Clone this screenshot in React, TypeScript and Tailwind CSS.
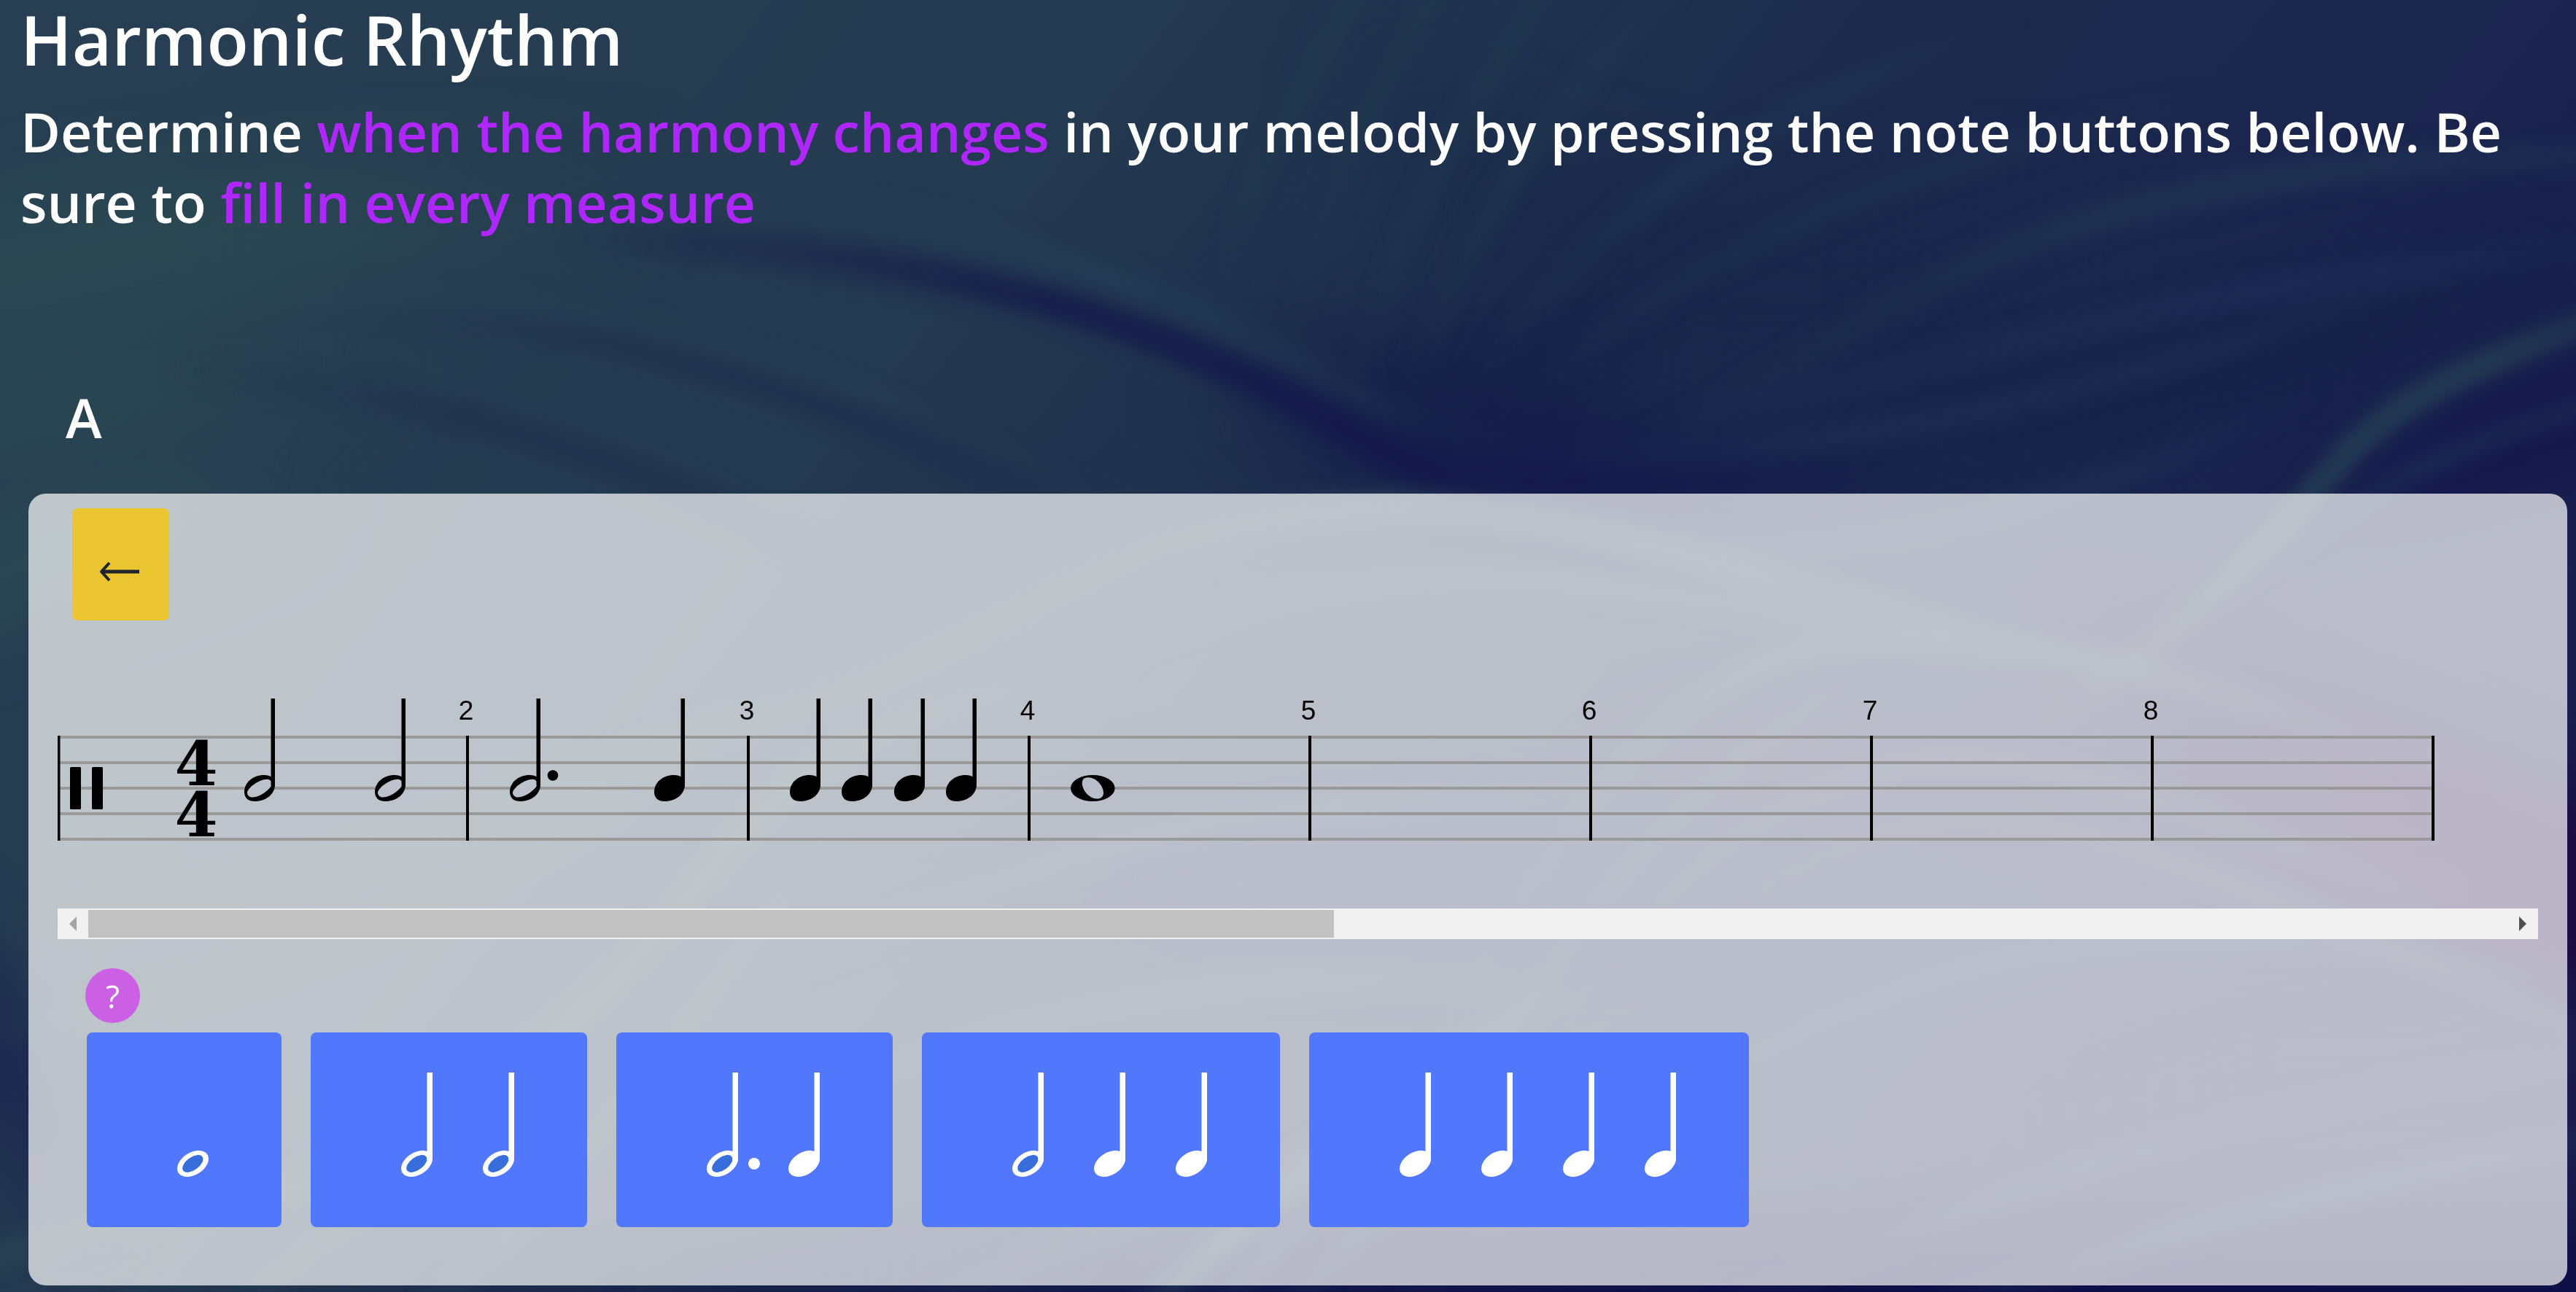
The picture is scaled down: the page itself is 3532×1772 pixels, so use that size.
import type { ReactNode } from "react";

type Streak = { d: string; w: number; c: string; o: number };

const broad: Streak[] = [
  { d: "M-340 230 C-80 180 100 130 400 130", w: 70, c: "#2e5053", o: 0.65 },
  { d: "M-300 300 C-60 260 60 220 260 230", w: 60, c: "#2e5053", o: 0.55 },
  { d: "M-200 420 C-60 370 40 330 200 290", w: 50, c: "#2e5254", o: 0.7 },
  { d: "M720 240 C850 290 980 310 1180 290", w: 50, c: "#12114a", o: 0.8 },
  { d: "M740 190 C830 250 900 250 1040 190", w: 70, c: "#151c48", o: 0.7 },
  { d: "M800 40 C900 160 1000 200 1300 160", w: 110, c: "#17254a", o: 0.6 },
  { d: "M960 285 C1200 270 1350 220 1700 120", w: 60, c: "#152046", o: 0.6 },
  { d: "M1340 360 C1480 280 1560 250 1800 190", w: 50, c: "#13134a", o: 0.9 },
  { d: "M1200 380 C1440 480 1520 560 1900 640", w: 130, c: "#1c0a42", o: 0.9 },
  { d: "M940 480 C1200 450 1360 500 1600 600", w: 60, c: "#24174a", o: 0.5 },
  { d: "M-120 540 C0 620 20 690 80 760", w: 60, c: "#1a2250", o: 0.9 },
  { d: "M520 570 C800 500 900 520 1080 560", w: 90, c: "#1a1e54", o: 0.5 },
  { d: "M1100 720 C1320 640 1450 660 1800 700", w: 90, c: "#20164c", o: 0.5 },
  { d: "M100 810 C500 770 900 770 2400 790", w: 60, c: "#0c0c46", o: 1 },
];

const fine: Streak[] = [
  { d: "M260 100 C480 110 660 150 780 215 C840 250 860 262 960 272", w: 16, c: "#26415a", o: 0.45 },
  { d: "M340 145 C600 150 730 210 820 262 C870 292 940 330 1080 370", w: 20, c: "#131549", o: 0.7 },
  { d: "M200 185 C380 190 560 250 760 370", w: 20, c: "#1a2549", o: 0.4 },
  { d: "M100 225 C280 240 420 290 560 370", w: 18, c: "#1c294b", o: 0.35 },
  { d: "M-110 250 C100 170 260 160 440 215 C560 250 640 290 800 380", w: 14, c: "#2c4758", o: 0.35 },
  { d: "M-200 200 C0 90 180 60 420 70", w: 16, c: "#2e4e52", o: 0.25 },
  { d: "M730 250 C740 130 790 60 860 -60", w: 10, c: "#264452", o: 0.42 },
  { d: "M780 260 C790 140 830 60 910 -60", w: 10, c: "#264452", o: 0.42 },
  { d: "M820 270 C840 150 890 60 980 -60", w: 10, c: "#264452", o: 0.45 },
  { d: "M850 280 C870 180 920 80 1050 -40", w: 10, c: "#264452", o: 0.45 },
  { d: "M870 280 C930 170 1010 90 1230 10", w: 14, c: "#243e58", o: 0.4 },
  { d: "M890 280 C970 200 1060 120 1350 60", w: 14, c: "#243e58", o: 0.35 },
  { d: "M990 280 C1120 210 1190 140 1380 110 C1480 95 1560 90 1700 100", w: 18, c: "#243e58", o: 0.45 },
  { d: "M980 270 C1180 230 1300 170 1680 140", w: 18, c: "#20335c", o: 0.4 },
  { d: "M860 265 C1060 300 1250 250 1540 150", w: 16, c: "#22365a", o: 0.4 },
  { d: "M880 320 C1100 350 1240 330 1420 230", w: 18, c: "#22365a", o: 0.45 },
  { d: "M1210 460 C1320 400 1380 330 1430 275 C1470 235 1520 215 1680 160", w: 14, c: "#2b4c58", o: 0.7 },
  { d: "M1340 370 C1450 290 1500 262 1680 220", w: 10, c: "#273f5a", o: 0.5 },
  { d: "M430 500 C600 360 720 310 860 308 C1000 315 1160 390 1400 430", w: 18, c: "#30525c", o: 0.5 },
  { d: "M540 470 C720 360 820 345 960 355 C1080 365 1180 400 1340 440", w: 14, c: "#2c465a", o: 0.4 },
  { d: "M300 480 C520 440 600 380 760 310", w: 16, c: "#30505a", o: 0.4 },
  { d: "M840 700 C920 560 960 460 1080 400 C1200 370 1300 400 1520 480", w: 12, c: "#304c5e", o: 0.45 },
  { d: "M880 700 C950 570 1000 490 1150 400", w: 7, c: "#304c5e", o: 0.5 },
  { d: "M910 700 C980 570 1040 500 1140 470 C1220 450 1320 480 1500 560", w: 9, c: "#304c5e", o: 0.5 },
  { d: "M945 700 C1010 580 1070 520 1180 500 C1280 490 1400 560 1700 680", w: 10, c: "#2e445a", o: 0.5 },
  { d: "M640 850 C760 740 820 690 960 590", w: 12, c: "#365a5e", o: 0.65 },
  { d: "M690 850 C800 730 850 690 980 590", w: 7, c: "#2d4a5a", o: 0.5 },
  { d: "M740 850 C840 730 900 680 1020 590", w: 7, c: "#2d4a5a", o: 0.45 },
  { d: "M790 850 C920 740 1000 650 1200 590 C1320 560 1440 570 1680 620", w: 12, c: "#293f5a", o: 0.4 },
  { d: "M980 830 C1200 730 1360 660 1700 630", w: 14, c: "#293f5a", o: 0.35 },
  { d: "M1100 830 C1320 740 1440 720 1700 670", w: 14, c: "#293f5a", o: 0.45 },
  { d: "M80 840 C260 720 380 600 440 520 C500 450 560 430 700 400", w: 16, c: "#365a5c", o: 0.5 },
  { d: "M210 840 C360 720 420 620 540 460", w: 12, c: "#365a5c", o: 0.4 },
  { d: "M-40 570 C180 540 280 520 480 420", w: 18, c: "#345458", o: 0.35 },
  { d: "M-60 640 C160 600 260 560 440 460", w: 14, c: "#345458", o: 0.35 },
  { d: "M-160 830 C60 720 180 740 240 700 C300 660 320 630 440 540", w: 14, c: "#365a5c", o: 0.45 },
  { d: "M460 600 C680 500 760 480 1000 490", w: 16, c: "#2b405c", o: 0.45 },
  { d: "M460 680 C660 600 760 590 970 600", w: 16, c: "#2d445a", o: 0.45 },
  { d: "M500 830 C660 740 760 720 960 650", w: 14, c: "#2b4058", o: 0.4 },
];

function Streaks({ items, blur }: { items: Streak[]; blur: string }) {
  return (
    <g filter={`url(#${blur})`} fill="none">
      {items.map((s, i) => (
        <g key={s.d}>
          <linearGradient id={`${blur}${i}`}>
            <stop offset="0" stopColor={s.c} stopOpacity="0" />
            <stop offset="0.4" stopColor={s.c} />
            <stop offset="0.65" stopColor={s.c} />
            <stop offset="1" stopColor={s.c} stopOpacity="0" />
          </linearGradient>
          <path d={s.d} stroke={`url(#${blur}${i})`} strokeWidth={s.w} opacity={s.o} />
        </g>
      ))}
    </g>
  );
}

function WaveBackdrop() {
  return (
    <svg aria-hidden="true" viewBox="0 0 1568 787" preserveAspectRatio="none" className="absolute inset-0 -z-10 h-full w-full">
      <defs>
        <linearGradient id="base" x1="0" y1="0.1" x2="1" y2="0.5">
          <stop offset="0" stopColor="#283f53" />
          <stop offset="0.35" stopColor="#243a50" />
          <stop offset="0.6" stopColor="#1c2b4d" />
          <stop offset="1" stopColor="#191f4f" />
        </linearGradient>
        <filter id="soft" filterUnits="userSpaceOnUse" x="-100" y="-100" width="1768" height="987" colorInterpolationFilters="sRGB">
          <feGaussianBlur stdDeviation="24" />
        </filter>
        <filter id="crisp" filterUnits="userSpaceOnUse" x="-100" y="-100" width="1768" height="987" colorInterpolationFilters="sRGB">
          <feGaussianBlur stdDeviation="6" />
        </filter>
      </defs>
      <rect width="1568" height="787" fill="url(#base)" />
      <Streaks items={broad} blur="soft" />
      <Streaks items={fine} blur="crisp" />
    </svg>
  );
}

const HEAD = "M0 23C0 10 12 0 27 0C36 0 42 4 42 13C42 26 30 36 14 36C6 36 0 32 0 23Z";

function StaffNote({ x, open, dotted }: { x: number; open?: boolean; dotted?: boolean }) {
  return (
    <g transform={`translate(${x} 212)`}>
      <path d={HEAD} />
      {open && (
        <path d="M4 24C4 18 20 5.7 31 5.7C35 5.7 37.6 8 37.6 12C37.6 18 22 30.5 11 30.5C7 30.5 4 28 4 24Z" fill="#bcc2cc" />
      )}
      <rect x="36.5" y="-105" width="5.5" height="119" />
      {dotted && <circle cx="59" cy="0.5" r="7.3" />}
    </g>
  );
}

const bars = [2, 3, 4, 5, 6, 7, 8];

function Staff() {
  return (
    <svg role="img" aria-label="Rhythm staff in 4/4" width="3401" height="395" viewBox="0 0 3401 395" className="block max-w-none">
      {[160, 195, 230, 265, 300].map((y) => (
        <rect key={y} x="0" y={y - 2} width="3258" height="4" fill="#999999" />
      ))}
      <rect x="0" y="158" width="3.5" height="144" />
      {bars.map((n, i) => (
        <g key={n}>
          <rect x={560 + i * 385} y="158" width="4" height="144" />
          <text x={560 + i * 385} y="136" textAnchor="middle" fontSize="37" fontWeight="400" fontFamily='"Liberation Sans", Arial, sans-serif'>
            {n}
          </text>
        </g>
      ))}
      <rect x="3255" y="158" width="4" height="144" />
      <rect x="17" y="201" width="15" height="58" rx="1.5" />
      <rect x="47" y="201" width="15" height="58" rx="1.5" />
      <g fontFamily='"DejaVu Serif", serif' fontWeight="700" fontSize="85" textAnchor="middle">
        <text x="190" y="226">4</text>
        <text x="190" y="296">4</text>
      </g>
      <StaffNote x={256} open />
      <StaffNote x={435} open />
      <StaffNote x={620} open dotted />
      <StaffNote x={818} />
      <StaffNote x={1004} />
      <StaffNote x={1075} />
      <StaffNote x={1147} />
      <StaffNote x={1218} />
      <g transform="translate(1389 212)">
        <ellipse cx="30.3" cy="18" rx="30.3" ry="18" />
        <path d="M15.7 11C15.7 6 19 3.3 24 3.3C35 3.3 45 15 45 24.5C45 30 41 32.5 36 32.5C25 32.5 15.7 20 15.7 11Z" fill="#b9bcc9" />
      </g>
    </svg>
  );
}

type Kind = "whole" | "half" | "dotted" | "quarter";

function NoteGlyph({ kind }: { kind: Kind }) {
  return (
    <svg aria-hidden="true" width="43" height="143" viewBox="0 0 43 143" className="block shrink-0 overflow-visible" fill="#ffffff">
      <ellipse cx="21.5" cy="125" rx="23.5" ry="15.3" transform="rotate(-32 21.5 125)" />
      {kind !== "quarter" && (
        <ellipse cx="21.3" cy="125" rx="16.2" ry="8.8" transform="rotate(-36 21.3 125)" fill="#386ddc" />
      )}
      {kind !== "whole" && <rect x="35.5" y="0" width="7.5" height="120" />}
      {kind === "dotted" && <circle cx="65" cy="125" r="8" />}
    </svg>
  );
}

const patterns: { label: string; notes: Kind[] }[] = [
  { label: "Whole note", notes: ["whole"] },
  { label: "Two half notes", notes: ["half", "half"] },
  { label: "Dotted half and quarter note", notes: ["dotted", "quarter"] },
  { label: "Half and two quarter notes", notes: ["half", "quarter", "quarter"] },
  { label: "Four quarter notes", notes: ["quarter", "quarter", "quarter", "quarter"] },
];

function Accent({ children }: { children: ReactNode }) {
  return <span className="text-[#b026ff]">{children}</span>;
}

function ScrollBar() {
  return (
    <div className="flex h-[42px] items-stretch bg-[#f1f1f1]">
      <button type="button" aria-label="Scroll left" className="flex w-[42px] items-center justify-center">
        <svg width="10" height="20" viewBox="0 0 10 20" fill="#a3a3a3"><path d="M10 0V20L0 10Z" /></svg>
      </button>
      <div className="flex-1 py-[2px]">
        <div className="h-full w-[51.5%] bg-[#c1c1c1]" />
      </div>
      <button type="button" aria-label="Scroll right" className="flex w-[42px] items-center justify-center">
        <svg width="10" height="20" viewBox="0 0 10 20" fill="#505050"><path d="M0 0V20L10 10Z" /></svg>
      </button>
    </div>
  );
}

export default function App() {
  return (
    <div className="relative isolate min-h-screen overflow-hidden pb-[9px] font-['Open_Sans','Noto_Sans',sans-serif] font-semibold text-white">
      <WaveBackdrop />
      <header className="px-7">
        <h1 className="text-[94px] leading-[108px]">Harmonic Rhythm</h1>
        <h2 className="mt-6 text-[75px] leading-[97px]">
          Determine <Accent>when the harmony changes</Accent> in your melody by pressing the note buttons below. Be sure to{" "}
          <Accent>fill in every measure</Accent>
        </h2>
      </header>
      <main>
        <h3 className="mt-[198px] pl-[90px] text-[75px] leading-[97px]">A</h3>
        <section className="mt-14 mr-3 ml-[39px] rounded-3xl bg-white/70 px-10 pt-5 pb-20">
          <button type="button" aria-label="Undo last rhythm" className="ml-5 flex h-[154px] w-[133px] items-center justify-center rounded-lg bg-[#ebc432] pt-5 pr-1">
            <svg width="54" height="26" viewBox="0 0 54 26" fill="none" stroke="#212529">
              <path d="M3 13H54" strokeWidth="5" />
              <path d="M13 1L2 13L13 25" strokeWidth="4" />
            </svg>
          </button>
          <div className="overflow-hidden">
            <Staff />
          </div>
          <ScrollBar />
          <button type="button" className="mt-10 ml-[38px] flex size-[75px] items-center justify-center rounded-full bg-[#cc60e4] text-[44px] leading-none font-normal">
            ?
          </button>
          <div className="mt-[13px] flex flex-wrap gap-10 pl-10">
            {patterns.map((p) => (
              <button key={p.label} type="button" aria-label={p.label} className="flex h-[267px] items-start gap-[69px] rounded-lg bg-[#5077fc] pt-[55px] pr-[100px] pl-[124px]">
                {p.notes.map((kind, i) => (
                  <NoteGlyph key={i} kind={kind} />
                ))}
              </button>
            ))}
          </div>
        </section>
      </main>
    </div>
  );
}
